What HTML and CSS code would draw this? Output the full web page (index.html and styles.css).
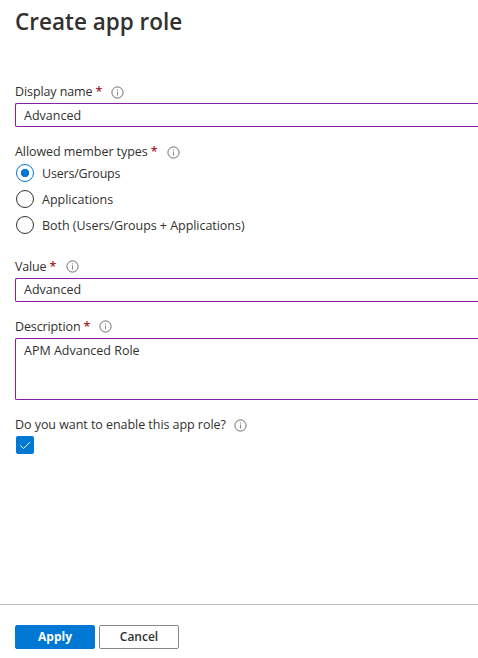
FILE: index.html
```
<!DOCTYPE html>
<html lang="en">
<head>
<meta charset="utf-8">
<title>Create app role</title>
<link rel="stylesheet" href="styles.css">
</head>
<body>
<svg class="defs" width="0" height="0" aria-hidden="true">
  <symbol id="info" viewBox="0 0 13 13">
    <circle cx="6.5" cy="6.5" r="5.6" fill="none" stroke="#605e5c" stroke-width="0.9"/>
    <path d="M6.5 5.5v4M6.5 3.4v1.1" fill="none" stroke="#888" stroke-width="1"/>
  </symbol>
</svg>
<form class="panel">
  <h1 class="title">Create app role</h1>
  <main class="fields">
    <section class="field name">
      <div class="label"><span class="t-name">Display name</span><b>*</b><svg class="info"><use href="#info"/></svg></div>
      <div class="input">Advanced</div>
    </section>
    <section class="field types">
      <div class="label"><span class="t-types">Allowed member types</span><b>*</b><svg class="info"><use href="#info"/></svg></div>
      <div class="options">
        <div class="option"><i class="radio on"></i><span class="t-users">Users/Groups</span></div>
        <div class="option"><i class="radio"></i><span>Applications</span></div>
        <div class="option"><i class="radio"></i><span class="t-both">Both (Users/Groups + Applications)</span></div>
      </div>
    </section>
    <section class="field value">
      <div class="label"><span class="t-value">Value</span><b>*</b><svg class="info"><use href="#info"/></svg></div>
      <div class="input">Advanced</div>
    </section>
    <section class="field description">
      <div class="label"><span class="t-desc">Description</span><b>*</b><svg class="info"><use href="#info"/></svg></div>
      <div class="input area">APM Advanced Role</div>
    </section>
    <section class="field enable">
      <div class="label"><span class="t-enable">Do you want to enable this app role?</span><svg class="info"><use href="#info"/></svg></div>
      <div class="check"><svg width="18" height="18" viewBox="0 0 18 18"><path d="M4.3 9.4l3.2 3.2 6.6-6.7" fill="none" stroke="#fff" stroke-width="1"/></svg></div>
    </section>
  </main>
  <footer class="footer">
    <button type="button" class="btn primary">Apply</button>
    <button type="button" class="btn">Cancel</button>
  </footer>
</form>
</body>
</html>
```
FILE: styles.css
```
* { box-sizing: border-box; }
body {
  margin: 0;
  background: #fff;
  color: #323130;
  font: 12.5px/18px "Open Sans", "Noto Sans", sans-serif;
  overflow: hidden;
}
.defs { display: block; height: 0; }
.panel { display: flex; flex-direction: column; height: 658px; }
.title {
  margin: 6px 0 0 15px;
  height: 32px;
  font-size: 22.5px;
  line-height: 32px;
  font-weight: 600;
}
.fields { flex: 1; padding: 45px 0 0 15px; }
.label { display: flex; align-items: center; height: 18px; }
.label b { margin-left: 3px; width: 8px; color: #a4262c; font-weight: 600; }
.info { width: 13px; height: 13px; margin-left: 8px; }
.value .info, .description .info { margin-bottom: 2px; }
.input {
  height: 24px;
  margin-top: 2px;
  padding: 2px 8px;
  border: 1px solid #881fa0;
  border-right: 0;
  border-radius: 2px 0 0 2px;
}
.name .input { padding-top: 3px; }
.t-name { letter-spacing: -0.1px; }
.t-types { letter-spacing: -0.06px; }
.t-users { letter-spacing: -0.2px; }
.t-both { letter-spacing: -0.04px; }
.t-value { letter-spacing: -0.15px; }
.t-desc { letter-spacing: -0.12px; }
.t-enable { letter-spacing: -0.05px; }
.area { height: 62px; padding-top: 3px; }
.types { margin-top: 16px; }
.options { margin-top: -1px; }
.option { display: flex; align-items: center; height: 26px; gap: 8px; padding-left: 1px; }
.option span { padding-top: 2px; }
.radio { width: 18px; height: 18px; border: 1px solid #323130; border-radius: 50%; }
.radio.on {
  border-color: #0078d4;
  background: radial-gradient(circle, #0078d4 0 3.8px, #fff 4.5px);
}
.value { margin-top: 20px; }
.description { margin-top: 16px; }
.enable { margin-top: 16px; }
.check {
  width: 18px;
  height: 18px;
  margin: 2px 0 0 1px;
  border-radius: 2px;
  background: #0078d4;
}
.check svg { display: block; }
.footer {
  display: flex;
  gap: 4px;
  height: 54px;
  padding: 20px 0 0 15px;
  border-top: 1px solid #bdbdbd;
}
.btn {
  width: 80px;
  height: 24px;
  padding: 0 0 1px;
  border: 1px solid #8a8886;
  border-radius: 2px;
  background: #fff;
  color: #323130;
  font: 600 12px/18px "Open Sans", "Noto Sans", sans-serif;
}
.btn.primary { border-color: #0078d4; background: #0078d4; color: #fff; font-weight: 700; }
```
